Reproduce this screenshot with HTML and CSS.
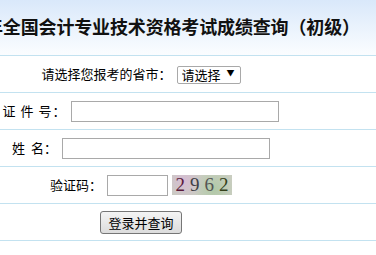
FILE: index.html
```html
<!DOCTYPE html>
<html lang="zh-CN">
<head>
    <meta charset="UTF-8">
    <title>全国会计专业技术资格考试成绩查询（初级）</title>
    <link rel="stylesheet" href="styles.css">
</head>
<body>
    <div class="header">
        <h1 class="title">年全国会计专业技术资格考试成绩查询（初级）</h1>
    </div>

    <form class="query">
        <div class="row">
            <div class="cell">
                <label>请选择您报考的省市：</label>
                <span class="select-wrap">
                    <select class="province">
                        <option>请选择</option>
                    </select>
                    <span class="arrow">▼</span>
                </span>
            </div>
        </div>
        <div class="row">
            <div class="cell">
                <label class="spaced">证 件 号：</label>
                <input type="text" class="field">
            </div>
        </div>
        <div class="row">
            <div class="cell">
                <label>姓&nbsp;&nbsp;名：</label>
                <input type="text" class="field">
            </div>
        </div>
        <div class="row">
            <div class="cell">
                <label>验证码：</label>
                <input type="text" class="field code">
                <span class="captcha"><b class="d1">2</b><b class="d2">9</b><b class="d3">6</b><b class="d4">2</b></span>
            </div>
        </div>
        <div class="row">
            <div class="cell">
                <button type="button" class="submit">登录并查询</button>
            </div>
        </div>
    </form>
</body>
</html>
```

FILE: styles.css
```css
* {
    margin: 0;
    padding: 0;
    box-sizing: border-box;
}
body {
    background: #fff;
    color: #000;
    font-family: "Noto Sans CJK SC", "Noto Sans", sans-serif;
    font-size: 13px;
    overflow: hidden;
}
.header {
    height: 56px;
    border-bottom: 1px solid #c3e2f0;
    background: linear-gradient(#d9e8fa, #fbfdff);
    display: flex;
    align-items: center;
    overflow: hidden;
}
.title {
    margin-left: -15px;
    margin-top: -3px;
    white-space: nowrap;
    font-size: 18px;
    font-weight: bold;
    color: #111;
    letter-spacing: -0.15px;
}
.row {
    height: 37px;
    border-bottom: 1px solid #c3e2f0;
}
.cell {
    width: 282px;
    height: 100%;
    display: flex;
    align-items: center;
    justify-content: center;
    gap: 5px;
}
label {
    white-space: pre;
    line-height: 16px;
}
.spaced {
    letter-spacing: 1px;
}
.select-wrap {
    position: relative;
    display: inline-block;
}
.province {
    appearance: none;
    width: 64px;
    height: 18px;
    border: 1px solid #a9a9a9;
    border-radius: 2px;
    background: #fff;
    font: inherit;
    font-size: 13px;
    line-height: 14px;
    padding: 0 0 0 4px;
    color: #000;
}
.arrow {
    position: absolute;
    right: 6px;
    top: 3px;
    font-size: 8px;
    line-height: 10px;
    pointer-events: none;
}
.field {
    width: 208px;
    height: 21px;
    border: 1px solid #a9a9a9;
    background: #fff;
}
.code {
    width: 61px;
}
.captcha {
    width: 60px;
    height: 20px;
    margin-left: -1px;
    display: inline-flex;
    align-items: center;
    justify-content: center;
    gap: 5px;
    background:
        radial-gradient(circle at 20% 30%, rgba(220, 180, 220, 0.7), transparent 40%),
        radial-gradient(circle at 70% 70%, rgba(170, 200, 160, 0.8), transparent 45%),
        #c9cdc0;
    font-family: "Liberation Serif", serif;
    font-size: 19px;
    line-height: 20px;
}
.captcha b {
    font-weight: normal;
}
.d1 { color: #5a1a3a; }
.d2 { color: #3f3f46; }
.d3 { color: #555; }
.d4 { color: #34401a; }
.submit {
    width: 82px;
    height: 23px;
    border: 1px solid #767676;
    border-radius: 3px;
    background: linear-gradient(#f4f4f4, #dcdcdc);
    font: inherit;
    font-size: 13px;
    color: #000;
}
```
